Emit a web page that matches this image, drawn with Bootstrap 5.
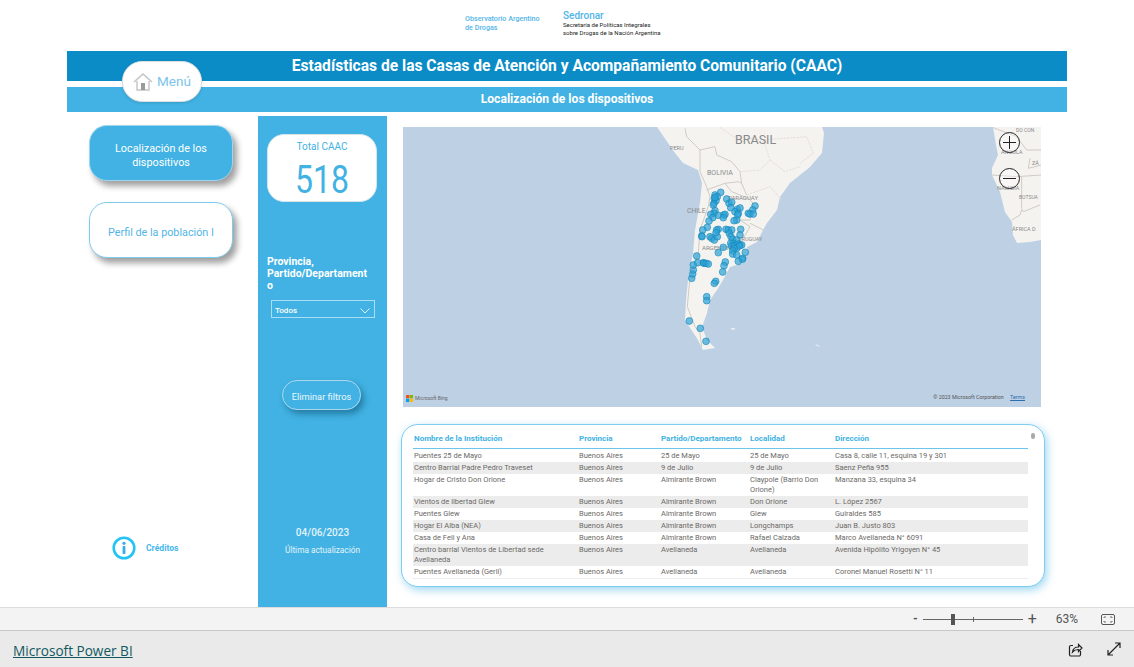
<!doctype html>
<html lang="es"><head><meta charset="utf-8"><title>CAAC</title>
<link rel="stylesheet" href="https://cdn.jsdelivr.net/npm/bootstrap@5.3.0/dist/css/bootstrap.min.css">
<style>
html,body{height:667px;overflow:hidden;background:#fff;font-family:"Roboto","Liberation Sans",sans-serif}
.pbi-stage{height:607px;overflow:hidden}
.pbi-report{width:1000px;margin-left:67px;position:relative}
.logo-row{height:51px;padding-left:398px;gap:23px;padding-top:11px}
.logo-a{color:#52b5e6;font-weight:500;width:75px;padding-top:3px;font-size:7.2px;line-height:9px}
.logo-b{color:#222;font-size:6px;line-height:7.5px}
.logo-b b{display:block;color:#52b5e6;font-size:10px;line-height:10px;font-weight:500}
.bar-top{height:30px;background:#0b8cc6;color:#fff;font-weight:700;font-size:15.6px;line-height:31px;text-align:center}
.bar-sub{height:25px;margin-top:6px;background:#41b2e3;color:#fff;font-weight:700;font-size:12.1px;line-height:25px;text-align:center}
.menu-pill{position:absolute;left:55px;top:61px;width:80px;height:41px;background:#fff;border:1px solid #d9dfe3;border-radius:20px;color:#7cc4ea;font-size:13.5px;gap:4px;box-shadow:0 1px 3px rgba(0,0,0,.12)}
.pbi-main{display:grid;grid-template-columns:191px 129px 1fr;margin-top:4px;height:491px}
.nav-col{padding:9px 0 0 22px;position:relative}
.nav-tile{width:144px;height:56px;border-radius:18px;font-size:10.8px;line-height:14px;text-align:center;box-shadow:4px 5px 6px rgba(0,0,0,.38);padding:6px 16px 0}
.nav-on{background:#41b2e3;color:#fff;border:1px solid #9ed6ef}
.nav-off{background:#fff;color:#52b5e6;border:1px solid #7fcbee;margin-top:21px}
.cred{position:absolute;left:45px;top:420px;gap:10px;color:#46b8ee;font-size:8.6px;font-weight:700}
.side-col{background:#41b2e3;color:#fff;padding:18px 9px 0}
.kpi{width:110px;height:68px;background:#fff;border:1px solid #d7e4ea;border-radius:17px;color:#41b2e3;text-align:center;padding-top:4px;font-size:10px;line-height:15px}
.kpi b{display:block;font-weight:400;font-size:39px;line-height:38px;margin-top:7px;transform:scaleX(.82)}
.slicer-t{font-size:10.5px;font-weight:700;line-height:12px;margin-top:54px;width:105px;word-break:break-all}
.slicer-t span{word-break:normal}
.slicer-b{width:104px;height:18px;margin:8px 0 0 4px;border:1px solid #a9def5;font-size:8px;font-weight:500;padding:3px 4px 0 3px}
.clear-b{width:79px;height:30px;margin:62px 0 0 15px;border:1px solid #a9d8ee;border-radius:15px;font-size:9.3px;padding-top:3px;box-shadow:3px 4px 6px rgba(0,60,90,.45);color:#e9f7fd}
.stamp{text-align:center;margin-top:116px;color:#e3f2fa}
.stamp b{display:block;font-size:10px;font-weight:500;line-height:14px}
.stamp span{display:block;font-size:8.3px;margin-top:5px;line-height:11px}
.body-col{padding:11px 26px 0 16px;min-width:0}
.map-box{width:638px;height:280px;position:relative;overflow:hidden;background:#bed0e4}
.map-box svg{display:block}
.map-zoom{position:absolute;left:596px;width:21px;height:21px;border:1.2px solid #222;border-radius:50%;background:rgba(255,255,255,.35)}
.zoom-in{top:5px}
.zoom-out{top:41px}
.map-zoom::before,.zoom-in::after{content:"";position:absolute;left:3px;right:3px;top:9px;height:1px;background:#222}
.zoom-in::after{left:9px;right:auto;top:3px;bottom:3px;width:1px;height:auto}
.bing{position:absolute;left:3px;bottom:5px;font-size:5px;color:#666;gap:2px}
.attr{position:absolute;right:16px;bottom:5px;font-size:5.3px;color:#555;white-space:nowrap}
.attr u{color:#2a6fb0;margin-left:5px}
.tbl-card{width:644px;height:163px;margin:17px 0 0 -2px;border:1px solid #7dcdf0;border-radius:17px;box-shadow:2px 3px 8px rgba(65,178,227,.5);padding:5px 8px 0 11px;background:#fff;position:relative}
.tbl-clip{height:149px;overflow:hidden}
.scroll-dot{position:absolute;right:9px;top:8px;width:4px;height:6px;border-radius:2px;background:#a9a9a9}
.tbl-card table{table-layout:fixed;width:615px;font-size:7.5px;line-height:10px;color:#6b6967;margin:0}
.tbl-card th{color:#41b2e3;font-weight:700;padding:4px 0 3px 1px;height:18px;border-bottom:1px solid #6cc6ec;white-space:nowrap;font-size:8px}
.tbl-card td{padding:1px 4px 1px 1px;vertical-align:top}
.tbl-card tbody tr:first-child td{padding-top:2px}
.tbl-card tr.alt td{background:#ececec}
.status-row{height:24px;background:#f3f3f3;border-top:1px solid #dcdcdc;border-bottom:1px solid #c8c8c8;color:#555;font-size:12px;padding-right:19px}
.zoom-track{width:100px;height:1px;background:#666;position:relative;margin:0 5px}
.zoom-thumb{position:absolute;left:28px;top:-5px;width:4px;height:11px;background:#555}
.zoom-tick{position:absolute;left:50px;top:-2px;width:1px;height:5px;background:#666}
.pct{margin-left:19px}
.fit-ico{margin-left:23px;display:block}
.foot-row{height:36px;background:#eaeaea;padding:0 13px}
.foot-row a{color:#11595f;font-size:13.6px;margin-top:4px;font-family:"Open Sans","Liberation Sans",sans-serif}
</style></head>
<body>
<div class="pbi-stage">
<div class="pbi-report">
  <div class="logo-row d-flex">
    <div class="logo-a">Observatorio Argentino<br>de Drogas</div>
    <div class="logo-b"><b>Sedronar</b>Secretaría de Políticas Integrales<br>sobre Drogas de la Nación Argentina</div>
  </div>
  <div class="bar-top">Estadísticas de las Casas de Atención y Acompañamiento Comunitario (CAAC)</div>
  <div class="bar-sub">Localización de los dispositivos</div>
  <div class="menu-pill d-flex align-items-center justify-content-center">
    <svg width="20" height="19" viewBox="0 0 20 19" aria-hidden="true"><path d="M1 10 10 2l9 8" fill="none" stroke="#c4c4c4" stroke-width="1.6"/><path d="M4 9v9h12V9" fill="none" stroke="#c4c4c4" stroke-width="1.4"/><rect x="8" y="11" width="4" height="7" fill="#9a9a9a"/></svg>
    <span>Menú</span>
  </div>
  <div class="pbi-main">
    <div class="nav-col">
      <div class="nav-tile nav-on d-flex align-items-center justify-content-center">Localización de los dispositivos</div>
      <div class="nav-tile nav-off d-flex align-items-center justify-content-center">Perfil de la población I</div>
      <div class="cred d-flex align-items-center">
        <svg width="24" height="24" viewBox="0 0 24 24" aria-hidden="true"><circle cx="12" cy="12" r="10.3" fill="none" stroke="#22c4f5" stroke-width="2.6"/><circle cx="12" cy="7.3" r="1.6" fill="#35aee8"/><rect x="10.6" y="10" width="2.8" height="8" rx=".8" fill="#35aee8"/></svg>
        <span>Créditos</span>
      </div>
    </div>
    <div class="side-col">
      <div class="kpi">Total CAAC<b>518</b></div>
      <div class="slicer-t"><span>Provincia,</span><br>Partido/Departamento</div>
      <div class="slicer-b d-flex align-items-center justify-content-between"><span>Todos</span>
        <svg width="10" height="6" viewBox="0 0 10 6" aria-hidden="true"><path d="M.5.5 5 5 9.500.5" fill="none" stroke="#e6f6fd" stroke-width="1"/></svg></div>
      <div class="clear-b d-flex align-items-center justify-content-center">Eliminar filtros</div>
      <div class="stamp"><b>04/06/2023</b><span>Última actualización</span></div>
    </div>
    <div class="body-col">
      <div class="map-box">
        <svg id="mapa" width="638" height="280" viewBox="403 127 638 280" aria-hidden="true">
          <path fill="#f5f3f0" d="M657 127 668 143 675 153 683 163 698 170 702 183 700 203 695 230 693 253 688 280 686 300 685 320 698 340 703 350 715 348 707 340 702 327 707 313 710 300 717 290 723 280 730 267 743 263 748 252 747 247 757 242 763 230 767 223 777 210 780 197 790 183 800 175 810 167 822 153 824 133 822 127Z"/>
          <path fill="#f5f3f0" d="M993 127 996 145 998 155 992 168 992 175 1000 192 1005 212 1012 222 1013 235 1017 243 1030 242 1041 240V127Z"/>
          <path fill="#e8eef4" d="M731 328h4v1.500h-4zM815 344l3 1 2 2-3-1z"/>
          <g transform="translate(600 120) scale(.3333)" fill="none" stroke="#cfcac4" stroke-width="3">
            <path d="M255 25 260 50 285 75 300 90 345 80 350 105 395 125 420 155 425 190 415 185 375 190 320 210"/>
            <path d="M300 90 300 155 320 200 330 230 325 260 300 330 295 400 270 470 262 560 285 620 300 640 305 680"/>
            <path d="M375 190 395 215 445 235 460 250 450 300 420 300 450 320 430 355M425 190 440 225M450 310 490 330"/>
          </g>
          <g transform="translate(600 120) scale(.3333)" fill="none" stroke="#dedad4" stroke-width="2.500" stroke-dasharray="7 3">
            <path d="M490 60 510 120 480 150 420 155M510 120 555 155 600 140M440 225 510 200 545 240M620 50 640 100 600 130M360 22 400 50 490 60 620 50"/>
          </g>
          <g transform="translate(920 125) scale(.3333)" fill="none" stroke="#cfcac4" stroke-width="3">
            <path d="M220 8 290 35 320 75 365 75M330 100 325 130 365 120M215 150 290 155 365 150M305 155 305 250 310 260 360 240M275 285 300 270 305 255"/>
          </g>
          <g font-family="Roboto,Liberation Sans,sans-serif" fill="#8a8a8a">
            <text x="735" y="144" font-size="12.500">BRASIL</text>
            <text x="670" y="150" font-size="5.500">PERU</text>
            <text x="707" y="174.500" font-size="7">BOLIVIA</text>
            <text x="687" y="213" font-size="6.800">CHILE</text>
            <text x="728" y="200" font-size="6">PARAGUAY</text>
            <text x="702" y="250" font-size="6">ARGENTINA</text>
            <text x="738" y="241" font-size="5.500">URUGUAY</text>
            <text x="1001" y="154" font-size="5.500">ANGOLA</text>
            <text x="1032" y="165" font-size="5.500">ZÂ</text>
            <text x="997" y="190" font-size="5.500">NAMIBIA</text>
            <text x="1019" y="199" font-size="5">BOTSUA</text>
            <text x="1012" y="231" font-size="5.500">ÁFRICA D</text>
            <text x="1016" y="131.500" font-size="5">DO CON</text>
          </g>
          <g id="pins"></g>
        </svg>
        <span class="map-zoom zoom-in"></span>
        <span class="map-zoom zoom-out"></span>
        <div class="bing d-flex align-items-center">
          <svg width="7" height="7" viewBox="0 0 8 8" aria-hidden="true"><rect width="3.800" height="3.800" fill="#f25022"/><rect x="4.200" width="3.800" height="3.800" fill="#7fba00"/><rect y="4.200" width="3.800" height="3.800" fill="#00a4ef"/><rect x="4.200" y="4.200" width="3.800" height="3.800" fill="#ffb900"/></svg>
          <span>Microsoft Bing</span></div>
        <div class="attr">© 2023 Microsoft Corporation <u>Terms</u></div>
      </div>
      <div class="tbl-card">
        <span class="scroll-dot"></span>
        <div class="tbl-clip">
        <table class="table-borderless">
          <colgroup><col style="width:165px"><col style="width:82px"><col style="width:89px"><col style="width:85px"><col></colgroup>
          <thead><tr><th>Nombre de la Institución</th><th>Provincia</th><th>Partido/Departamento</th><th>Localidad</th><th>Dirección</th></tr></thead>
          <tbody>
            <tr><td>Puentes 25 de Mayo</td><td>Buenos Aires</td><td>25 de Mayo</td><td>25 de Mayo</td><td>Casa 8, calle 11, esquina 19 y 301</td></tr>
            <tr class="alt"><td>Centro Barrial Padre Pedro Traveset</td><td>Buenos Aires</td><td>9 de Julio</td><td>9 de Julio</td><td>Saenz Peña 955</td></tr>
            <tr><td>Hogar de Cristo Don Orione</td><td>Buenos Aires</td><td>Almirante Brown</td><td>Claypole (Barrio Don Orione)</td><td>Manzana 33, esquina 34</td></tr>
            <tr class="alt"><td>Vientos de libertad Glew</td><td>Buenos Aires</td><td>Almirante Brown</td><td>Don Orione</td><td>L. López 2567</td></tr>
            <tr><td>Puentes Glew</td><td>Buenos Aires</td><td>Almirante Brown</td><td>Glew</td><td>Guiraldes 585</td></tr>
            <tr class="alt"><td>Hogar El Alba (NEA)</td><td>Buenos Aires</td><td>Almirante Brown</td><td>Longchamps</td><td>Juan B. Justo 803</td></tr>
            <tr><td>Casa de Feli y Ana</td><td>Buenos Aires</td><td>Almirante Brown</td><td>Rafael Calzada</td><td>Marco Avellaneda N° 6091</td></tr>
            <tr class="alt"><td>Centro barrial Vientos de Libertad sede Avellaneda</td><td>Buenos Aires</td><td>Avellaneda</td><td>Avellaneda</td><td>Avenida Hipólito Yrigoyen N° 45</td></tr>
            <tr><td>Puentes Avellaneda (Gerli)</td><td>Buenos Aires</td><td>Avellaneda</td><td>Avellaneda</td><td>Coronel Manuel Rosetti N° 11</td></tr>
            <tr class="alt"><td>&nbsp;</td><td></td><td></td><td></td><td></td></tr>
          </tbody>
        </table>
        </div>
      </div>
    </div>
  </div>
</div>
</div>
<div class="status-row d-flex align-items-center justify-content-end">
  <b class="fw-bold">-</b><div class="zoom-track"><span class="zoom-thumb"></span><span class="zoom-tick"></span></div><span class="fs-6 lh-1">+</span>
  <span class="pct">63%</span>
  <svg class="fit-ico" width="14" height="11" viewBox="0 0 14 11" aria-hidden="true"><rect x=".5" y=".5" width="13" height="10" rx="1.500" fill="none" stroke="#555"/><path d="M3 4V3h2M9 3h2v1M11 7v1H9M5 8H3V7" fill="none" stroke="#555" stroke-width=".8"/></svg>
</div>
<div class="foot-row d-flex align-items-center justify-content-between">
  <a href="#">Microsoft Power BI</a>
  <div class="d-flex align-items-center gap-4">
    <svg width="15" height="15" viewBox="0 0 15 15" aria-hidden="true"><path d="M12.500 9v3.500a1.500 1.500 0 0 1-1.500 1.500H3a1.500 1.500 0 0 1-1.500-1.500V5A1.500 1.500 0 0 1 3 3.500h2" fill="none" stroke="#222" stroke-width="1.200"/><path d="M4.500 10c.5-3.500 3-5 6-5V2.500L14 6l-3.500 3.500V7.500c-2.500 0-4.500.8-6 2.500Z" fill="none" stroke="#222" stroke-width="1.200"/></svg>
    <svg width="14" height="14" viewBox="0 0 14 14" aria-hidden="true"><path d="M1 13 13 1M8 1h5v5M1 8v5h5" fill="none" stroke="#222" stroke-width="1.200"/></svg>
  </div>
</div>
<script>
var Z=[[362,217],[345,225],[352,230],[343,236],[348,242],[342,250],[340,255],[345,232],[380,237],[387,250],[395,247],[392,263],[412,268],[420,264],[405,275],[415,280],[413,285],[465,258],[458,270],[445,280],[450,282],[460,282],[345,272],[342,280],[332,283],[372,285],[355,286],[375,283],[338,293],[370,293],[327,303],[410,300],[402,302],[422,328],[322,322],[308,330],[305,348],[306,350],[330,350],[335,355],[343,360],[352,350],[355,328],[350,330],[348,338],[378,328],[385,330],[395,330],[388,340],[393,350],[398,358],[420,345],[410,360],[400,370],[392,370],[395,378],[403,378],[415,372],[420,375],[425,375],[410,385],[418,378],[402,385],[398,392],[370,382],[355,398],[398,402],[410,405],[428,415],[427,418],[436,397],[415,424],[290,408],[275,475],[278,462],[280,450],[280,435],[293,428],[310,428],[312,430],[318,430],[325,432],[376,426],[372,437],[368,456],[347,484],[343,490],[320,530],[320,542],[268,603],[301,625],[318,664]];
var s='';
Z.forEach(function(p){s+='<circle cx="'+(p[0]/3+600).toFixed(1)+'" cy="'+(p[1]/3+120).toFixed(1)+'" r="3.400" fill="#2da3d6" fill-opacity=".7" stroke="#0f83b8" stroke-opacity=".7" stroke-width=".8"/>';});
document.getElementById('pins').innerHTML=s;
</script>
<script src="https://cdn.jsdelivr.net/npm/bootstrap@5.3.0/dist/js/bootstrap.bundle.min.js"></script>
</body></html>
